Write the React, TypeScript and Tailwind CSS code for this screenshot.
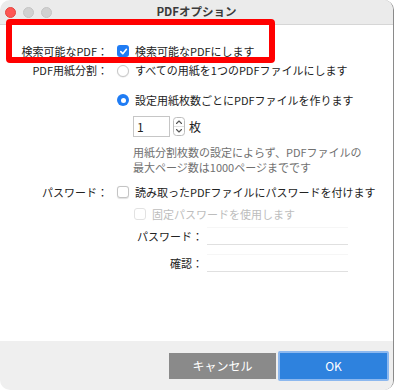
import React from "react";

function CheckedBox() {
  return (
    <span className="w-[12px] h-[12px] rounded-[3px] bg-[#1f7cf4] flex items-center justify-center shrink-0">
      <svg width="9" height="9" viewBox="0 0 10 10">
        <path d="M2 5.2 L4.2 7.4 L8.2 2.6" fill="none" stroke="white" strokeWidth="1.8" strokeLinecap="round" strokeLinejoin="round" />
      </svg>
    </span>
  );
}

function EmptyBox({ disabled = false }: { disabled?: boolean }) {
  return (
    <span
      className={
        disabled
          ? "w-[12px] h-[12px] rounded-[3px] border border-[#e2e2e2] bg-white shrink-0"
          : "w-[12px] h-[12px] rounded-[3px] border border-[#c4c4c4] bg-white shadow-[0_0.5px_1px_rgba(0,0,0,0.12)] shrink-0"
      }
    />
  );
}

function Radio({ checked = false }: { checked?: boolean }) {
  return checked ? (
    <span className="w-[12px] h-[12px] rounded-full bg-[#1f7cf4] flex items-center justify-center shrink-0">
      <span className="w-[5px] h-[5px] rounded-full bg-white" />
    </span>
  ) : (
    <span className="w-[12px] h-[12px] rounded-full border border-[#c8c8c8] bg-white shadow-[0_0.5px_1px_rgba(0,0,0,0.12)] shrink-0" />
  );
}

function Stepper() {
  return (
    <svg width="12" height="19" viewBox="0 0 12 19" className="shrink-0">
      <rect x="0.5" y="0.5" width="11" height="18" rx="3" fill="white" stroke="#bdbdbd" />
      <line x1="1" y1="9.5" x2="11" y2="9.5" stroke="#e2e2e2" />
      <path d="M3.5 6.5 L6 4 L8.5 6.5" fill="none" stroke="#555" strokeWidth="1.1" strokeLinecap="round" strokeLinejoin="round" />
      <path d="M3.5 12.5 L6 15 L8.5 12.5" fill="none" stroke="#555" strokeWidth="1.1" strokeLinecap="round" strokeLinejoin="round" />
    </svg>
  );
}

export default function App() {
  return (
    <div
      className="w-[400px] h-[391px] bg-white relative overflow-hidden text-[#222]"
      style={{ fontFamily: '"Noto Sans CJK JP", "Noto Sans", sans-serif' }}
    >
      <div className="w-[394px] h-[390px] flex flex-col rounded-[10px] border-r border-[#8a8a8a] overflow-hidden bg-white">
        {/* Title bar */}
        <div className="h-[25px] shrink-0 bg-[#ebebeb] border-b border-[#d6d6d6] grid grid-cols-[1fr_auto_1fr] items-center">
          <div className="flex items-center gap-[7px] pl-[5px] pt-[1px]">
            <span className="w-[11px] h-[11px] rounded-full bg-[#fd5754] border border-[#e2463f]" />
            <span className="w-[11px] h-[11px] rounded-full bg-[#d1d1d1] border border-[#c4c4c4]" />
            <span className="w-[11px] h-[11px] rounded-full bg-[#d1d1d1] border border-[#c4c4c4]" />
          </div>
          <div className="text-[11.5px] font-bold text-[#3a3a3a] leading-none">PDFオプション</div>
          <div />
        </div>

        {/* Body */}
        <div className="flex-1 flex flex-col text-[11px] leading-none">
          <div className="mt-[16px] h-[20px] flex items-center">
            <div className="w-[108px] text-right">検索可能なPDF：</div>
            <div className="ml-[9px] flex items-center gap-[6px]">
              <CheckedBox />
              <span>検索可能なPDFにします</span>
            </div>
          </div>

          <div className="h-[19px] flex items-center">
            <div className="w-[108px] text-right">PDF用紙分割：</div>
            <div className="ml-[9px] flex items-center gap-[6px]">
              <Radio />
              <span>すべての用紙を1つのPDFファイルにします</span>
            </div>
          </div>

          <div className="mt-[10px] h-[20px] flex items-center">
            <div className="ml-[117px] flex items-center gap-[6px]">
              <Radio checked />
              <span>設定用紙枚数ごとにPDFファイルを作ります</span>
            </div>
          </div>

          <div className="mt-[6px] h-[21px] flex items-center ml-[133px]">
            <div className="w-[37px] h-[21px] border border-[#c6c6c6] bg-white flex items-center pl-[3px] text-[12px]">
              1
            </div>
            <div className="ml-[3px]">
              <Stepper />
            </div>
            <span className="ml-[4px] text-[12px]">枚</span>
          </div>

          <div className="mt-[8px] ml-[133px] leading-[15px] text-[#707070]">
            <div>用紙分割枚数の設定によらず、PDFファイルの</div>
            <div>最大ページ数は1000ページまでです</div>
          </div>

          <div className="mt-[7px] h-[20px] flex items-center">
            <div className="w-[108px] text-right">パスワード：</div>
            <div className="ml-[9px] flex items-center gap-[6px]">
              <EmptyBox />
              <span>読み取ったPDFファイルにパスワードを付けます</span>
            </div>
          </div>

          <div className="mt-[2px] h-[20px] flex items-center ml-[134px] gap-[6px]">
            <EmptyBox disabled />
            <span className="text-[#bdbdbd]">固定パスワードを使用します</span>
          </div>

          <div className="mt-[3px] h-[18px] flex items-center">
            <div className="w-[203px] text-right">パスワード：</div>
            <div className="ml-[4px] w-[141px] h-[18px] border-t border-b border-t-[#f6f6f6] border-b-[#e0e0e0]" />
          </div>

          <div className="mt-[9px] h-[18px] flex items-center">
            <div className="w-[203px] text-right">確認：</div>
            <div className="ml-[4px] w-[141px] h-[18px] border-t border-b border-t-[#f6f6f6] border-b-[#e0e0e0]" />
          </div>
        </div>

        {/* Footer */}
        <div className="h-[49px] shrink-0 bg-[#efefef] flex items-center justify-end pr-[4px] gap-[2px]">
          <div className="w-[107px] h-[26px] bg-[#8a8a8a] text-white text-[12px] flex items-center justify-center">
            キャンセル
          </div>
          <div className="w-[111px] h-[30px] bg-[#2e82de] border-[2px] border-[#8cb8ef] rounded-[2px] text-white text-[12px] flex items-center justify-center">
            OK
          </div>
        </div>
      </div>

      {/* Red annotation box */}
      <div className="absolute left-[6px] top-[19px] w-[269px] h-[44px] border-[6px] border-[#ff0000] rounded-[4px]" />
    </div>
  );
}
